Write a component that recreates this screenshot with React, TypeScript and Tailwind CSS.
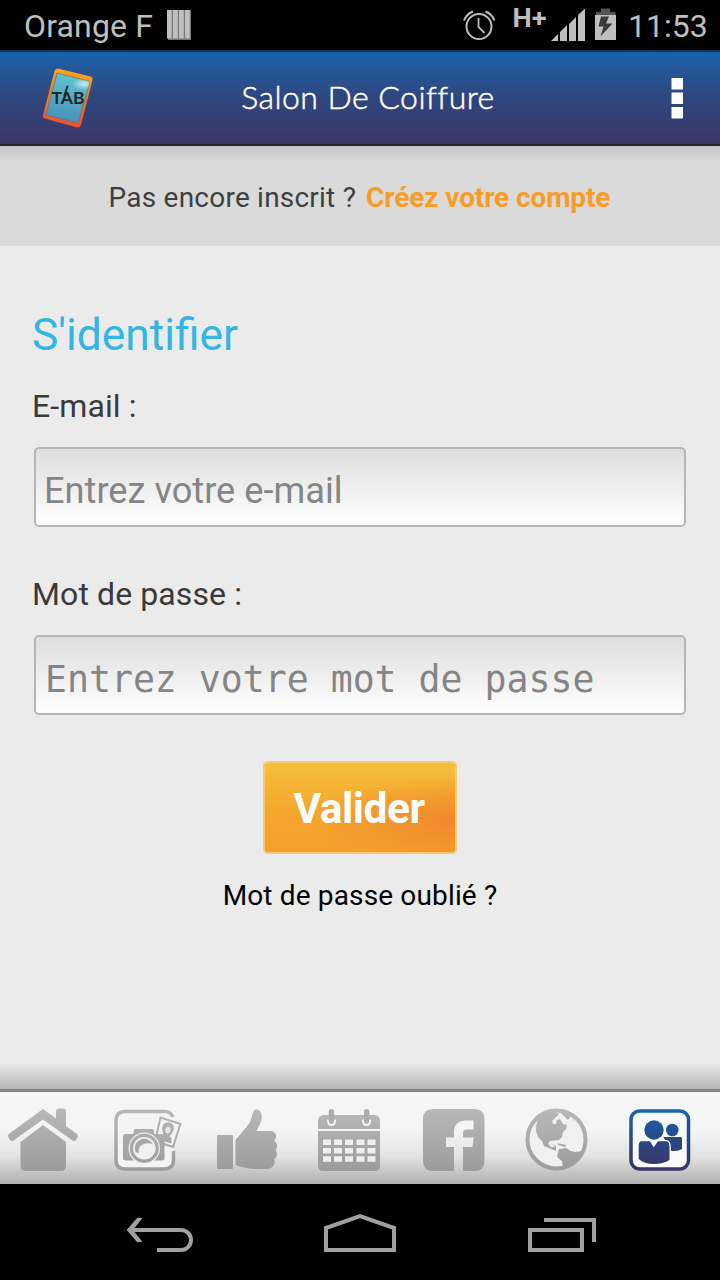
import type { ReactNode } from "react";

function StatusBar() {
  return (
    <div className="flex h-[50px] shrink-0 items-center bg-black pl-[24px] text-[#bebebe]">
      <span className="w-[143px] pt-[2px] whitespace-nowrap text-[32px] leading-[50px] tracking-[0.15px]">Orange F</span>
      <svg width="26" height="50" viewBox="167 0 26 50">
        <path fill="#777" d="M168 10h23v30h-23z" />
        <path fill="#bfbfbf" d="M167 10h4.800v28.500h-4.800zM173 10h4.800v28.500h-4.800zM179 10h4.800v28.500h-4.800zM185 10h4.800v28.500h-4.800z" />
      </svg>
      <svg className="ml-auto" width="50" height="50" viewBox="460 0 50 50" fill="none" stroke="#bebebe">
        <circle cx="479" cy="26.500" r="12.500" strokeWidth="2" />
        <path d="M478.500 18v9l6 6" strokeWidth="1.800" />
        <path d="M464 20.500q2.500-6.500 9-9M494.500 20.500q-2.500-6.500-9-9" strokeWidth="2" />
      </svg>
      <svg width="118" height="50" viewBox="510 0 118 50" fill="#bebebe">
        <text x="512.500" y="27" textLength="34" lengthAdjust="spacingAndGlyphs" fontFamily="Roboto, sans-serif" fontWeight="bold" fontSize="25">H+</text>
        <path d="M551 41l7-7v7zM560 41V32l7-7v16zM569 41V24l7-7v24zM578 41V15l7-6.500V41z" />
        <path fill="#555" d="M601 8.500h9V12h5.500v3H596v-3h5z" />
        <path d="M595 15h21v25h-21z" />
        <path fill="#3a3a3a" d="M601 16.500h8l-3 7h6.500l-12 13 3-10h-5z" />
      </svg>
      <span className="w-[92px] pt-[2px] whitespace-nowrap text-[32px] leading-[50px]">11:53</span>
    </div>
  );
}

function Header() {
  return (
    <header className="flex h-[96px] shrink-0 items-center justify-between border-t-2 border-b-2 border-t-[#0d3a5f] border-b-[#25212c] bg-linear-to-b from-[#1363aa] via-[#2e467f] to-[#3b3664]">
      <svg width="110" height="92" viewBox="0 52 110 92">
        <defs>
          <linearGradient id="frame" x1="0.500" y1="0" x2="0.450" y2="1">
            <stop stopColor="#fba51b" />
            <stop offset="1" stopColor="#f04a32" />
          </linearGradient>
          <linearGradient id="screen" x1="0.600" y1="0" x2="0.400" y2="1">
            <stop stopColor="#61c6d0" />
            <stop offset="1" stopColor="#468fbd" />
          </linearGradient>
          <radialGradient id="shine">
            <stop stopColor="#fff" stopOpacity=".7" />
            <stop offset="1" stopColor="#fff" stopOpacity="0" />
          </radialGradient>
          <clipPath id="glass">
            <path d="M57 73 90 81.500 78 123 46 115z" />
          </clipPath>
        </defs>
        <path d="M58 68.500 90.500 76.500Q93 77.500 92.500 80L81 125Q80 128 77 127.500L45 118.500Q42.500 117.500 43 115L54.500 71Q55.500 68 58 68.500z" fill="url(#frame)" />
        <path d="M57 73 90 81.500 78 123 46 115z" fill="url(#screen)" stroke="#5f7268" strokeWidth=".7" />
        <ellipse cx="84" cy="84" rx="12" ry="6" fill="url(#shine)" clipPath="url(#glass)" />
        <path d="M64.500 95 67.500 86.500" stroke="#202525" strokeWidth="2" strokeLinecap="round" />
        <text x="51.500" y="104.200" textLength="33" lengthAdjust="spacingAndGlyphs" fontFamily="Lato, sans-serif" fontWeight="bold" fontSize="17" fill="#202525">TAB</text>
      </svg>
      <h1 className="mr-[4px] mb-[3px] whitespace-nowrap font-['Lato',sans-serif] text-[32px] font-light tracking-[0.45px] text-white [-webkit-text-stroke:0.5px_white]">Salon De Coiffure</h1>
      <svg width="90" height="92" viewBox="630 52 90 92" fill="#fff">
        <path d="M671.500 78h11.500v11.500h-11.500zM671.500 92.500h11.500v11.500h-11.500zM671.500 107h11.500v11.500h-11.500z" />
      </svg>
    </header>
  );
}

function Field({ label, type, hint, className }: { label: string; type: string; hint: string; className: string }) {
  return (
    <label className="block">
      <span className="block h-[40px] whitespace-nowrap text-[32px] leading-[40px] tracking-[0.1px] text-[#3a3a3a]">{label}</span>
      <input
        type={type}
        placeholder={hint}
        className={`mt-[21px] ml-[2px] block h-[80px] w-[652px] rounded-[5px] border-2 border-[#b6b6b6] bg-linear-to-b from-[#dedede] to-white pr-[8px] outline-none placeholder:text-[#858585] placeholder:opacity-100 ${className}`}
      />
    </label>
  );
}

function Tab({ children, x, w, label }: { children: ReactNode; x: number; w: number; label: string }) {
  return (
    <button aria-label={label} className="block shrink-0">
      <svg width={w} height="92" viewBox={`${x} 1092 ${w} 92`}>{children}</svg>
    </button>
  );
}

function TabBar() {
  const g = "url(#grey)";
  const b = "url(#blue)";
  return (
    <nav className="flex h-[95px] shrink-0 border-t-[3px] border-[#858585] bg-linear-to-b from-[#f5f5f5] from-40% via-[#e3e3e3] via-70% to-[#b0b0b0]">
      <svg width="0" height="0" className="absolute">
        <defs>
          <linearGradient id="grey" gradientUnits="userSpaceOnUse" x1="0" y1="1108" x2="0" y2="1172">
            <stop stopColor="#b9b9b9" />
            <stop offset="1" stopColor="#9b9b9b" />
          </linearGradient>
          <linearGradient id="blue" gradientUnits="userSpaceOnUse" x1="0" y1="1108" x2="0" y2="1172">
            <stop stopColor="#1467b0" />
            <stop offset=".55" stopColor="#2b4581" />
            <stop offset="1" stopColor="#3c3264" />
          </linearGradient>
        </defs>
      </svg>
      <Tab label="Accueil" x={0} w={95}>
        <g fill={g}>
          <path d="M43 1109 56 1118.500V1111q0-2.500 2.500-2.500h5q2.500 0 2.500 2.500V1126L77 1134q1.800 1.500.5 3.500l-1.500 2.500q-1.500 1.500-3.500.5L43 1119.500 13.500 1140.500q-2 1-3.500-.5L8.300 1137.500q-1-2 .5-3.500z" />
          <path d="M43 1125 66 1142v24q0 5-5 5H25.500q-5 0-5-5v-24z" />
        </g>
      </Tab>
      <Tab label="Photos" x={95} w={103}>
        <path d="M173 1117Q170.500 1111.500 165 1111.500H125Q116 1111.500 116 1121V1160Q116 1169 125 1169H164Q173.500 1169 173.500 1160V1151" fill="#f4f4f4" stroke={g} strokeWidth="3.500" />
        <path d="M160.500 1117.500 180.500 1124 173 1147 155 1141z" fill="#f2f2f2" stroke={g} strokeWidth="2" />
        <path d="M162 1129Q162.500 1121.500 169 1122.500Q175.500 1124 173.500 1130L171.500 1134 169.500 1136 171.500 1138.500 171.500 1143.500 160 1140 163.500 1135Z" fill={g} />
        <ellipse cx="168" cy="1130" rx="2.600" ry="3.500" fill="#e6e6e6" transform="rotate(16 168 1130)" />
        <path d="M125 1134h8.500v-3q0-2 2-2H152q2 0 2 2v3h8q2.500 0 2.500 2.500V1158q0 2.500-2.500 2.500H125.500q-2.500 0-2.500-2.500v-21.500q0-2.500 2-2.500z" fill={g} />
        <circle cx="144.300" cy="1148.300" r="15.800" fill="#ececec" />
        <circle cx="144.300" cy="1148.300" r="14.500" fill={g} />
        <circle cx="144.300" cy="1148.300" r="11.300" fill="#f0f0f0" />
        <path d="M135.500 1152A9.300 9.300 0 0 1 153 1144.500Q147 1141.500 141 1145.500Q138 1148 138.500 1153.500Z" fill={g} />
      </Tab>
      <Tab label="J'aime" x={198} w={103}>
        <g fill={g}>
          <rect x="217" y="1135" width="16" height="34" rx="1" />
          <path d="M235.500 1140Q244 1130 248 1125C253 1120 251 1109 257 1109.500C263 1110.500 262.500 1120 260 1124L256.500 1131H270C277 1131 277.500 1138 274 1140.500C278 1143 277.500 1148 275.500 1150C278 1153 277 1158 274 1159.500C276.500 1164 272 1169 266 1169H254Q243 1168 235.500 1165z" />
        </g>
      </Tab>
      <Tab label="Agenda" x={301} w={100}>
        <path d="M318 1129v-8q0-6 6-6h50q6 0 6 6v8zM318 1131h62v35q0 5-5 5h-52q-5 0-5-5z" fill={g} />
        <path d="M328 1119.500q-.5 5.500 3.500 5.500t3.500-5.500M363 1119.500q-.5 5.500 3.500 5.500t3.500-5.500" fill="none" stroke="#f3f3f3" strokeWidth="2" />
        <path d="M328.700 1111.500q0-2.500 2.700-2.500t2.700 2.500V1120q0 2.500-2.700 2.500t-2.700-2.500zM364 1111.500q0-2.500 2.700-2.500t2.700 2.500V1120q0 2.500-2.700 2.500t-2.700-2.500z" fill="#adadad" />
        <path fill="#efefef" d="M323 1139.500h8v5.500h-8zM334 1139.500h8v5.500h-8zM345 1139.500h8v5.500h-8zM356.500 1139.500h8v5.500h-8zM367.500 1139.500h8v5.500h-8zM323 1148h8v5.500h-8zM334 1148h8v5.500h-8zM345 1148h8v5.500h-8zM356.500 1148h8v5.500h-8zM367.500 1148h8v5.500h-8zM323 1156.300h8v5.500h-8zM334 1156.300h8v5.500h-8zM345 1156.300h8v5.500h-8zM356.500 1156.300h8v5.500h-8zM367.500 1156.300h8v5.500h-8z" />
      </Tab>
      <Tab label="Facebook" x={401} w={104}>
        <path fill={g} d="M433 1109h41.500q10 0 10 10v42q0 10-10 10H463v-24h9.500l1.300-9.500H463v-4q0-4 4-4h6.500v-9H465q-11 1-11 11v6h-8v9.500h8v24H433q-10 0-10-10v-42q0-10 10-10z" />
      </Tab>
      <Tab label="Site web" x={505} w={103}>
        <circle cx="556.500" cy="1139.500" r="29" fill="#f0f0f0" stroke={g} strokeWidth="4" />
        <g fill={g}>
          <path d="M536 1131Q536 1120 541 1115Q548 1111 555 1111.500L559 1114 556 1117 552 1121 553 1124 556 1124 557 1120 560 1119 563 1124 567 1125 566 1129 563 1132 562 1137 559 1140 550 1141 548 1144 551 1147 555 1147 553 1144 556 1146 556 1151 549 1148 544 1146 542 1141 538 1137Z" />
          <path d="M560 1112 565 1117 568 1120 571 1116 574 1121 572 1113Z" />
          <path d="M559 1149 566 1148 571 1151 575 1152 582 1151 576 1161 568 1167 563 1169 562 1161 557 1157 558 1152Z" />
          <path d="M557 1143 566 1145 565 1147 558 1145z" />
        </g>
      </Tab>
      <Tab label="Compte" x={608} w={112}>
        <rect x="631" y="1111" width="57.500" height="58" rx="8.500" fill="#fafafa" stroke={b} strokeWidth="3.500" />
        <circle cx="672.300" cy="1130" r="6.300" fill={b} />
        <path d="M663.500 1137h17.500q1 0 1 2v10q-5 3-12 1.500z" fill={b} />
        <path d="M641 1141.300h9l3.700 6 4.300-6h8.500Q669.500 1142 669.500 1147V1160Q663 1164 654 1164Q644 1164 638.700 1159V1146Q638.700 1142 641 1141.300z" fill={b} stroke="#fafafa" strokeWidth="2.800" paintOrder="stroke" />
        <circle cx="654" cy="1130" r="9.700" fill={b} />
      </Tab>
    </nav>
  );
}

function SystemNav() {
  return (
    <div className="flex h-[96px] shrink-0 justify-between bg-black px-[100px]">
      <svg width="120" height="96" viewBox="100 1184 120 96" fill="none" stroke="#a0a0a0" strokeWidth="4">
        <path d="M130 1230h51a10 10 0 0 1 0 20h-24" />
        <path fill="#a0a0a0" stroke="none" d="M137 1218h5.500l-9.500 12 9.500 12H137l-10.300-12z" />
      </svg>
      <svg width="120" height="96" viewBox="300 1184 120 96" fill="none" stroke="#a0a0a0" strokeWidth="4">
        <path d="M326 1250v-22l34-12 34 12v22z" />
      </svg>
      <svg width="120" height="96" viewBox="500 1184 120 96" fill="none" stroke="#a0a0a0" strokeWidth="4">
        <path d="M530 1230h52v20h-52zM544 1220h50v22" />
      </svg>
    </div>
  );
}

export default function App() {
  return (
    <div className="flex h-[1280px] w-[720px] flex-col overflow-hidden bg-[#ebebeb] font-['Roboto',sans-serif]">
      <StatusBar />
      <Header />
      <div className="flex h-[100px] shrink-0 items-center justify-center gap-[10px] bg-linear-to-b from-[#c4c4c4] to-[#dadada] to-[16px] pt-[3px] pr-[1px] text-[28px] whitespace-nowrap">
        <span className="tracking-[0.22px] text-[#3f3f3f]">Pas encore inscrit ?</span>
        <a className="font-bold tracking-[-0.1px] text-[#f79c27]">Créez votre compte</a>
      </div>
      <main className="flex flex-1 flex-col px-[32px] pt-[59px]">
        <h2 className="h-[60px] text-[44.300px] leading-[60px] text-[#33b5e5]">S'identifier</h2>
        <form className="mt-[21px] flex flex-col gap-[47px]">
          <Field label="E-mail :" type="text" hint="Entrez votre e-mail" className="pt-[7px] pl-[8px] text-[36.200px]" />
          <Field label="Mot de passe :" type="password" hint="Entrez votre mot de passe" className="pt-[8px] pl-[9px] font-['DejaVu_Sans_Mono',monospace] text-[36.500px]" />
        </form>
        <button className="mt-[46px] h-[93px] w-[194px] self-center rounded-[5px] border-2 border-[#f7c96c] bg-[radial-gradient(ellipse_at_105%_65%,#f0872c_0%,#f0872c00_55%),linear-gradient(to_bottom,#f5c03a,#f4a62d_55%,#f4a02c)] pt-[3px] pr-[2px] text-[42.500px] font-bold tracking-[-0.5px] text-white">
          Valider
        </button>
        <a className="mt-[21px] self-center text-[28px] leading-[42px] tracking-[0.15px] whitespace-nowrap text-black">Mot de passe oublié ?</a>
      </main>
      <div className="h-[26px] shrink-0 bg-linear-to-b from-[#ebebeb] to-[#b4b4b4]" />
      <TabBar />
      <SystemNav />
    </div>
  );
}
